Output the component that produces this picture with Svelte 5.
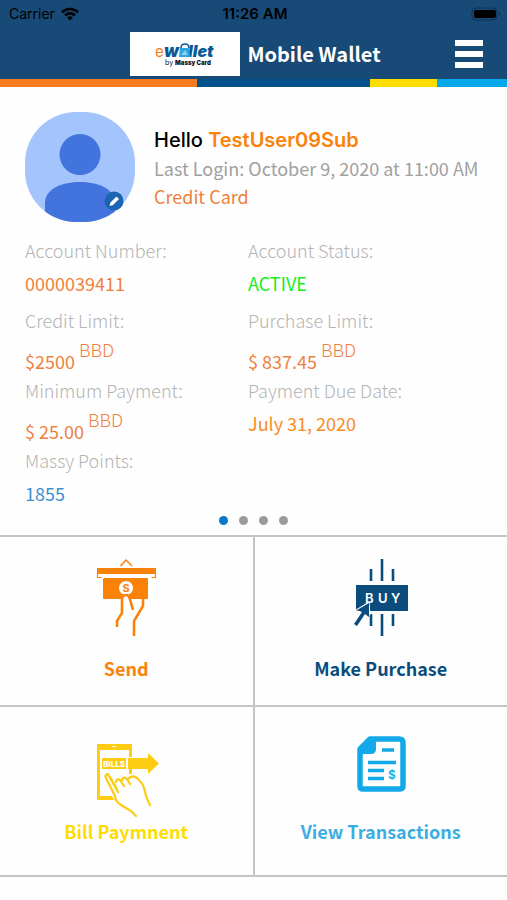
<script>
    const stripes = [
        { color: '#f47b20', share: 197 },
        { color: '#00548b', share: 173 },
        { color: '#fddc00', share: 67 },
        { color: '#08a8ec', share: 70 }
    ];

    const columns = [
        [
            { label: 'Account Number:', value: '0000039411', tone: 'orange' },
            { label: 'Credit Limit:', value: '$2500', currency: 'BBD', tone: 'orange' },
            { label: 'Minimum Payment:', value: '$ 25.00', currency: 'BBD', tone: 'orange' },
            { label: 'Massy Points:', value: '1855', tone: 'blue' }
        ],
        [
            { label: 'Account Status:', value: 'ACTIVE', tone: 'green' },
            { label: 'Purchase Limit:', value: '$ 837.45', currency: 'BBD', tone: 'orange' },
            { label: 'Payment Due Date:', value: 'July 31, 2020', tone: 'amber' }
        ]
    ];

    const cards = [0, 1, 2, 3];
    let current = $state(0);
</script>

<header>
    <div class="status">
        <span class="carrier">
            Carrier
            <svg width="18" height="14" viewBox="0 0 18 14" fill="none" stroke="#000" stroke-width="2.6">
                <path d="M1 5.2a11.5 11.5 0 0 1 16 0M4 8.4a7.2 7.2 0 0 1 10 0" />
                <path d="M9 13.6L6 10.6a4.3 4.3 0 0 1 6 0z" fill="#000" stroke="none" />
            </svg>
        </span>
        <span class="time">11:26 AM</span>
        <svg class="battery" width="30" height="14" viewBox="0 0 30 14">
            <rect x="1" y="1" width="25" height="12" rx="4" fill="none" stroke="#0b3252" />
            <rect x="3" y="3" width="22" height="8" rx="2" />
            <path d="M28 5v4q2-2 0-4z" fill="#0b3252" />
        </svg>
    </div>
    <div class="bar">
        <div class="logo">
            <svg width="110" height="44" viewBox="0 0 110 44" role="img" aria-label="ewallet by Massy Card">
                <g font-family="Inter, sans-serif">
                    <text x="25" y="25" font-size="15" fill="#f47b20">e</text>
                    <text x="34" y="25" font-size="17" font-weight="900" font-style="italic" fill="#0b5a96">w</text>
                    <text x="58" y="25" font-size="16" font-weight="900" font-style="italic" fill="#0b5a96">llet</text>
                    <text x="35" y="33" font-size="7" fill="#111">by <tspan font-size="6" font-weight="900">Massy Card</tspan></text>
                </g>
                <path d="M51 16q0-4 4-4t4 4" fill="none" stroke="#0b5a96" stroke-width="1.5" />
                <path d="M50 16h9l1 9H49z" fill="#2ca6df" />
                <path d="M51 23l4-5 3 5z" fill="#8ad2f2" />
            </svg>
        </div>
        <h1>Mobile Wallet</h1>
        <button class="menu" aria-label="Menu">
            <svg width="28" height="28" viewBox="0 0 28 28" fill="#fff">
                <path d="M0 0h28v6H0zM0 11h28v6H0zM0 22h28v6H0z" />
            </svg>
        </button>
    </div>
    <div class="stripes">
        {#each stripes as s}
            <span style="flex-grow: {s.share}; background: {s.color}"></span>
        {/each}
    </div>
</header>

<main>
    <section class="profile">
        <button class="avatar" aria-label="Edit profile picture">
            <svg width="110" height="110" viewBox="0 0 110 110">
                <defs>
                    <clipPath id="face"><rect width="110" height="110" rx="51" /></clipPath>
                </defs>
                <g clip-path="url(#face)">
                    <rect width="110" height="110" fill="#a3c4fd" />
                    <circle cx="55" cy="42.500" r="20.500" fill="#4374dd" />
                    <path d="M20 110V90C21 76 38 70 55 70s34 6 35 20v20z" fill="#4374dd" />
                </g>
                <circle cx="89" cy="89" r="9.500" fill="#1c65b5" />
                <path d="M84.500 94l1-3.500 6-6 2.500 2.500-6 6z" fill="#fff" />
            </svg>
        </button>
        <div class="who">
            <h2>Hello <b>TestUser09Sub</b></h2>
            <p>Last Login: October 9, 2020 at 11:00 AM</p>
            <p class="orange">Credit Card</p>
        </div>
    </section>

    <section class="details">
        {#each columns as column}
            <dl>
                {#each column as item}
                    <div class="item">
                        <dt>{item.label}</dt>
                        <dd class={item.tone} class:money={item.currency}>
                            <span>{item.value}</span>
                            {#if item.currency}<small>{item.currency}</small>{/if}
                        </dd>
                    </div>
                {/each}
            </dl>
        {/each}
    </section>

    <div class="dots">
        {#each cards as card}
            <button class:active={card === current} aria-label="Card {card + 1}" onclick={() => (current = card)}></button>
        {/each}
    </div>

    <nav>
        <a href="#send" class="send">
            <svg width="84" height="92" viewBox="0 0 84 92" fill="none" stroke="#fb8209" stroke-width="2">
                <path d="M36.500 21l5.500-6 6 6" stroke-width="1.500" />
                <path d="M13 23h59v6H13z" fill="#fb8209" stroke="none" />
                <path d="M13.500 28v4.500h4M71.500 28v4.500h-4" stroke-width="1.200" />
                <path d="M21 33h42q1 0 1 1v19q0 1-1 1H20q-1 0-1-1V34q0-1 2-1z" fill="#fb8209" stroke="none" />
                <circle cx="42" cy="43" r="7" fill="#fff" stroke="none" />
                <path d="M36 62l1-9q1-4 5-4 3 0 4 4l2 9H36z" fill="#fff" stroke="none" />
                <path d="M33 82v-6l5-8V55q0-5 4-5 3 0 4 4l3 11M59 54v7l-9 15v15" stroke-width="2.600" />
                <text x="42" y="47" font-family="Inter, sans-serif" font-size="11" font-weight="700" text-anchor="middle" fill="#fb8209" stroke="none">S</text>
            </svg>
            <span>Send</span>
        </a>
        <a href="#purchase" class="purchase">
            <svg width="82" height="92" viewBox="0 0 82 92" fill="none" stroke="#0a4d7c" stroke-width="3">
                <path d="M42 14v22M31 24v12M53 24v12M42 69v22M31 69v12M53 69v12" stroke-width="2.600" />
                <path d="M16 40h52v26H16z" fill="#0a4d7c" stroke="none" />
                <text x="25" y="58" font-family="Inter, sans-serif" font-size="13" font-weight="600" fill="#fff" stroke="none">B</text>
                <text x="38" y="58" font-family="Inter, sans-serif" font-size="13" font-weight="600" fill="#fff" stroke="none">U</text>
                <text x="51" y="58" font-family="Inter, sans-serif" font-size="13" font-weight="600" fill="#fff" stroke="none">Y</text>
                <path d="M16 65L29 57l1 13-3-3-10 14-3-2 9-14z" fill="#fff" stroke="#fff" stroke-width="1" />
                <path d="M17 65l12-7v14l-4-3-8 12-3-2 8-12z" fill="#0a4d7c" stroke="none" />
            </svg>
            <span>Make Purchase</span>
        </a>
        <a href="#bills" class="bills low">
            <svg width="84" height="92" viewBox="0 0 84 92" fill="none" stroke="#fdcc13" stroke-width="3">
                <path d="M13 19h35v6H13zM13 71h15l2 4H13z" fill="#fdcc13" stroke="none" />
                <path d="M14.500 20v54M46.500 20v12M46.500 44v5" />
                <path d="M28 21.500h4" stroke="#fff" stroke-width="1" />
                <path d="M18 33h24v11H18zM44 33h20v-5l11 10.500L64 49v-5H44z" fill="#fdcc13" stroke="none" />
                <text x="30" y="42" font-family="Inter, sans-serif" font-size="8" font-weight="800" text-anchor="middle" fill="#fff" stroke="none">BILLS</text>
                <path d="M34 67l-9-16q-1-3-3-1-1 1 0 3l9 18q0 5 6 9l10 6 5 5M26 52l7 12M32 57q0-4 4-2l4 6M38 55q1-4 5-1l3 5M45 53q4-3 8 0 7 6 8 14 1 5 5 13" stroke-width="2.200" stroke-linecap="round" stroke-linejoin="round" />
            </svg>
            <span>Bill Paymnent</span>
        </a>
        <a href="#transactions" class="transactions low">
            <svg width="92" height="92" viewBox="0 0 92 92" fill="none" stroke="#13a9e9">
                <path d="M35 14h29q4 0 4 4v43q0 3-4 3H28q-3 0-3-3V24z" stroke-width="5.500" stroke-linejoin="round" />
                <path d="M24 29v-6l10-10h7v11q0 5-5 5z" fill="#13a9e9" stroke="none" />
                <path d="M47 25h12M33 37.500h28M33 45.500h16M33 53.500h16" stroke-width="3.500" />
                <text x="57" y="54" font-family="Inter, sans-serif" font-size="12" font-weight="600" text-anchor="middle" fill="#13a9e9" stroke="none">$</text>
            </svg>
            <span>View Transactions</span>
        </a>
    </nav>
</main>

<style>
    :global(body) {
        margin: 0;
        background: #fefefe;
        font-family: "Noto Sans CJK SC", "Noto Sans", sans-serif;
        font-size: 18px;
    }

    button {
        padding: 0;
        border: 0;
        background: none;
        cursor: pointer;
    }

    svg {
        display: block;
    }

    header {
        background: #174a77;
    }

    .status {
        display: grid;
        grid-template-columns: 1fr auto 1fr;
        align-items: center;
        height: 28px;
        padding: 0 6px 0 9px;
        font: 14px/28px Inter, sans-serif;
    }

    .carrier {
        display: flex;
        align-items: center;
        gap: 6px;
    }

    .time {
        font-size: 15px;
        font-weight: 600;
    }

    .battery {
        justify-self: end;
    }

    .bar {
        display: grid;
        grid-template-columns: 1fr auto auto 1fr;
        align-items: center;
        column-gap: 7px;
        height: 51px;
        padding: 0 24px 0 28px;
    }

    .logo {
        grid-column: 2;
        background: #fff;
    }

    h1 {
        margin: 0;
        font-size: 20px;
        line-height: 28px;
        font-weight: 700;
        color: #fff;
    }

    .menu {
        justify-self: end;
    }

    .stripes {
        display: flex;
        height: 8px;
    }

    .profile {
        display: flex;
        align-items: center;
        gap: 19px;
        padding: 25px 25px 13px;
    }

    .avatar {
        flex: none;
    }

    .who {
        padding-top: 2px;
    }

    h2 {
        margin: 0;
        font: 500 20px/28px Inter, sans-serif;
    }

    h2 b {
        font-weight: 600;
        color: #fb8209;
    }

    .who p {
        margin: 0;
        line-height: 28px;
        color: #a0a0a0;
        white-space: nowrap;
    }

    .details {
        display: grid;
        grid-template-columns: 223px 1fr;
        padding: 0 25px;
    }

    dl {
        margin: 0;
    }

    .item {
        height: 70px;
    }

    dt {
        line-height: 30px;
        font-weight: 300;
        color: #b4b4b4;
    }

    dd {
        display: flex;
        gap: 4px;
        margin: 0;
        line-height: 36px;
    }

    dd.money {
        line-height: 28px;
    }

    .money span {
        padding-top: 12px;
    }

    dd small {
        font-size: 18px;
        font-weight: 300;
    }

    dd.orange, .who .orange {
        color: #ee8140;
    }

    .blue {
        color: #3d8fd0;
    }

    .green {
        color: #12ee20;
    }

    .amber {
        color: #f98d1c;
    }

    .dots {
        display: flex;
        justify-content: center;
        gap: 11px;
        padding: 1px 0 10px;
    }

    .dots button {
        width: 9px;
        height: 9px;
        border-radius: 50%;
        background: #9b9b9b;
    }

    .dots .active {
        background: #0878cf;
    }

    nav {
        display: grid;
        grid-template-columns: 1fr 1fr;
        gap: 2px;
        padding: 2px 0;
        background: #c4c4c4;
    }

    nav a {
        display: flex;
        flex-direction: column;
        align-items: center;
        gap: 17px;
        height: 168px;
        padding-top: 8px;
        box-sizing: border-box;
        background: #fefefe;
        font-weight: 700;
        line-height: 28px;
        text-decoration: none;
    }

    nav .low {
        gap: 0;
        padding-top: 18px;
    }

    .send {
        color: #fb8209;
    }

    .purchase {
        color: #0a4d7c;
    }

    .bills {
        color: #fddc00;
    }

    .transactions {
        color: #3bade3;
    }
</style>
